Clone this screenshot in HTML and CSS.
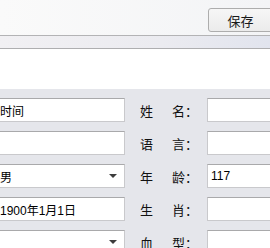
FILE: index.html
```html
<!DOCTYPE html>
<html lang="zh-CN">
<head>
  <meta charset="UTF-8">
  <title>资料</title>
  <link rel="stylesheet" href="styles.css">
</head>
<body>
  <div class="toolbar">
    <button class="btn">保存</button>
  </div>
  <div class="strip"></div>
  <div class="blank"></div>

  <div class="form">
    <div class="field"><span class="value">时间</span></div>
    <div class="label"><span>姓</span><span>名：</span></div>
    <div class="field"></div>

    <div class="field"></div>
    <div class="label"><span>语</span><span>言：</span></div>
    <div class="field"></div>

    <div class="field select"><span class="value">男</span><i class="arrow"></i></div>
    <div class="label"><span>年</span><span>龄：</span></div>
    <div class="field"><span class="value">117</span></div>

    <div class="field"><span class="value">1900年1月1日</span></div>
    <div class="label"><span>生</span><span>肖：</span></div>
    <div class="field"></div>

    <div class="field select"><span class="value"></span><i class="arrow"></i></div>
    <div class="label"><span>血</span><span>型：</span></div>
    <div class="field"></div>
  </div>
</body>
</html>
```

FILE: styles.css
```css
/* General */
body {
  margin: 0;
  font-family: "Liberation Sans", "Noto Sans CJK SC", sans-serif;
  background: #e5e6eb;
  overflow: hidden;
}

.toolbar {
  height: 35px;
  border-bottom: 1px solid #b3b3b5;
  background: linear-gradient(to right, #fafafa, #f3f4f6);
  display: flex;
  justify-content: flex-end;
  align-items: flex-start;
}

.btn {
  margin: 8px -3px 0 0;
  width: 65px;
  height: 24px;
  border: 1px solid #adadad;
  border-radius: 3px;
  background: linear-gradient(to bottom, #f6f6f6, #ebebeb);
  font-family: "Noto Sans CJK SC", sans-serif;
  font-size: 13px;
  color: #1a1a1a;
  padding: 0;
}

.strip {
  height: 12px;
  border-bottom: 1px solid #aeaeb0;
  background: linear-gradient(to right, #f1f0f3, #ebebf0 60%, #e1e4ee);
}

.blank {
  height: 40px;
  background: #fff;
}

/* Form grid */
.form {
  display: grid;
  grid-template-columns: 129px 82px 80px;
  row-gap: 9px;
  padding-top: 9px;
  margin-left: -4px;
}

.field {
  height: 24px;
  box-sizing: border-box;
  background: #fff;
  border: 1px solid #c9c9cc;
  border-top-color: #a9a9ab;
  display: flex;
  align-items: center;
  padding-left: 3px;
  font-size: 12px;
  color: #000;
}

.select {
  justify-content: space-between;
  padding-right: 7px;
}

.arrow {
  width: 0;
  height: 0;
  border-left: 4px solid transparent;
  border-right: 4px solid transparent;
  border-top: 4px solid #3c3c3c;
}

.label {
  display: flex;
  align-items: center;
  padding-left: 15px;
  gap: 19px;
  font-family: "Noto Sans CJK SC", sans-serif;
  font-size: 13px;
  color: #111;
}
```
